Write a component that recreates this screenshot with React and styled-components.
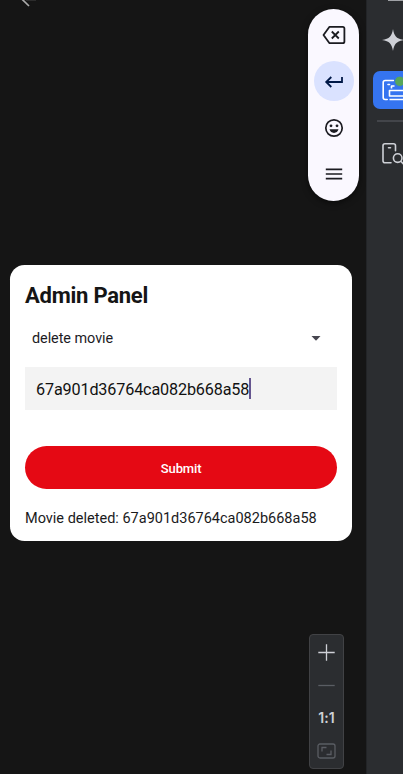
import React from 'react';
import styled, { createGlobalStyle } from 'styled-components';

const GlobalStyle = createGlobalStyle`
  * { box-sizing: border-box; }
  body { margin: 0; background: #151515; font-family: Roboto, sans-serif; overflow: hidden; }
  svg { display: block; flex: none; }
`;

const Window = styled.div`
  display: flex;
  width: 403px;
  height: 774px;
  overflow: hidden;
  background: #151515;
`;

const Device = styled.main`
  position: relative;
  display: flex;
  flex-direction: column;
  width: 366px;
  height: 100%;
  flex: none;
  background: #151515;
`;

const TopBar = styled.header`
  height: 265px;
  flex: none;
  padding-left: 20px;
`;

const Card = styled.section`
  display: flex;
  flex-direction: column;
  width: 341.5px;
  height: 276.3px;
  margin-left: 10.4px;
  padding: 0 14.6px;
  border-radius: 14.5px;
  background: #fff;
  color: #1a1a1c;
`;

const Title = styled.h1`
  margin: 18px 0 0;
  font-size: 22px;
  line-height: 26px;
  font-weight: 700;
  letter-spacing: -0.24px;
  color: #151515;
`;

const Select = styled.div`
  display: flex;
  align-items: center;
  justify-content: space-between;
  height: 43px;
  margin-top: 8px;
  padding: 0 16px 0 7px;
  font-size: 14.4px;
  letter-spacing: -0.04px;
  color: #1c1b1f;
`;

const Field = styled.div`
  display: flex;
  align-items: center;
  height: 43px;
  margin-top: 7px;
  padding: 2px 0 0 11px;
  background: #f3f3f3;
  font-size: 16.2px;
  letter-spacing: -0.15px;
  color: #111;
`;

const Caret = styled.span`
  width: 2px;
  height: 21px;
  margin: -2px 0 0 -0.5px;
  background: #65558f;
`;

const Submit = styled.button`
  height: 43px;
  margin-top: 36px;
  padding: 1px 0 0;
  border: 0;
  border-radius: 22px;
  background: #e50914;
  color: #fff;
  font: 500 13px Roboto, sans-serif;
  letter-spacing: -0.1px;
`;

const Message = styled.p`
  margin: 21px 0 0;
  font-size: 14.5px;
  line-height: 18px;
  white-space: nowrap;
`;

const KeyPill = styled.div`
  position: absolute;
  top: 9px;
  left: 308px;
  display: flex;
  flex-direction: column;
  align-items: center;
  width: 51px;
  height: 192px;
  padding-top: 6px;
  gap: 6.3px;
  border-radius: 25.5px;
  background: #faf8ff;
  box-shadow: 0 2px 6px #0008;
`;

const Key = styled.div`
  display: flex;
  align-items: center;
  justify-content: center;
  width: 40px;
  height: 40px;
  border-radius: 50%;
  background: ${p => (p.$active ? '#dae2ff' : 'transparent')};
`;

const ZoomBar = styled.div`
  position: absolute;
  top: 634px;
  left: 309px;
  display: flex;
  flex-direction: column;
  align-items: center;
  width: 35px;
  height: 135px;
  padding-top: 1px;
  border: 1px solid #414245;
  border-radius: 4px;
  background: #2b2d30;
`;

const ZoomItem = styled.div`
  display: flex;
  align-items: center;
  justify-content: center;
  width: 33px;
  height: 33px;
  padding-bottom: ${p => p.$lift || 0}px;
  font: 600 14px Inter, sans-serif;
  letter-spacing: 0.1px;
  color: #ced0d6;
`;

const Rail = styled.aside`
  display: flex;
  flex-direction: column;
  width: 37px;
  height: 100%;
  overflow: hidden;
  border-left: 1px solid #222427;
  background: #2b2d30;
`;

const RailTop = styled.div`
  width: 15px;
  height: 1px;
  margin-left: 21px;
  background: #a0a2a6;
`;

const RailItem = styled.div`
  display: flex;
  align-items: center;
  width: 40px;
  height: 38px;
  flex: none;
  margin: ${p => p.$top}px 0 0 6px;
  padding-left: ${p => p.$inset}px;
  border-radius: 7px;
  background: ${p => (p.$active ? '#3574f0' : 'transparent')};
`;

const Divider = styled.div`
  height: 2px;
  flex: none;
  margin: 11px 0 0 10px;
  background: #43454a;
`;

const BackIcon = () => (
  <svg width="18" height="8" viewBox="20 0 18 8" fill="none">
    <path d="M21.8-1 29 6" stroke="#aaa" strokeWidth="1.7" />
    <path d="M26 0h10" stroke="#444" strokeWidth="1" />
  </svg>
);

const Backspace = () => (
  <svg width="24" height="20" viewBox="0 0 24 20" fill="none" stroke="#1b1b21" strokeWidth="1.8">
    <path d="M7.5 1.8h13.2q1.7 0 1.7 1.7v13q0 1.7-1.7 1.7H7.5L1.5 10Z" strokeLinejoin="round" />
    <path d="m9.8 6.5 7 7m0-7-7 7" />
  </svg>
);

const Enter = () => (
  <svg width="20" height="16" viewBox="0 0 20 16" fill="none" stroke="#001847" strokeWidth="1.8">
    <path d="M18 4v5H3M7.3 4l-5.1 5 5.1 5" />
  </svg>
);

const Smile = () => (
  <svg width="20" height="20" viewBox="0 0 20 20">
    <circle cx="10" cy="10" r="8.2" fill="none" stroke="#1b1b21" strokeWidth="1.7" />
    <circle cx="7" cy="7.8" r="1.4" fill="#1b1b21" />
    <circle cx="13" cy="7.8" r="1.4" fill="#1b1b21" />
    <path d="M5.5 11.3h9c-.6 2.2-2.3 3.6-4.5 3.6s-3.9-1.4-4.5-3.6Z" fill="#1b1b21" />
  </svg>
);

const Menu = () => (
  <svg width="18" height="14" viewBox="0 0 18 14" stroke="#1b1b21" strokeWidth="1.7">
    <path d="M.8 2.3h16.4M.8 7h16.4M.8 11.7h16.4" />
  </svg>
);

const Sparkle = () => (
  <svg width="22" height="22" viewBox="0 0 22 22">
    <path d="M11 0c1.2 7.2 3.4 9.8 11 11-7.6 1.2-9.8 3.8-11 11C9.8 14.8 7.6 12.2 0 11 7.6 9.8 9.8 7.2 11 0Z" fill="#ced0d6" />
  </svg>
);

const RunningDevice = () => (
  <svg width="27" height="34" viewBox="0 0 27 34" fill="none" stroke="#fff" strokeWidth="1.6" strokeLinejoin="round">
    <path d="M11.5 7.5H3.2q-2 0-2 2v15q0 2 2 2h2M6 11.5h1.5" strokeLinecap="round" />
    <path d="M9.5 15.5v-2.5h3M7.5 17.5h15v5.5h-15ZM7.5 26.5H24" />
    <circle cx="17.8" cy="8.3" r="5.2" fill="#57a65a" stroke="#3574f0" strokeWidth="1" />
  </svg>
);

const DeviceSearch = () => (
  <svg width="24" height="24" viewBox="0 0 24 24" fill="none" stroke="#ced0d6" strokeWidth="1.6" strokeLinecap="round">
    <path d="M9 20.8H3q-2 0-2-2V3.7q0-2 2-2h8.5q2 0 2 2v5M6.5 5.7h2" />
    <circle cx="15.7" cy="16.1" r="4.3" />
    <path d="m19 19.5 3 3" />
  </svg>
);

export default function App() {
  return (
    <>
      <GlobalStyle />
      <Window>
        <Device>
          <TopBar><BackIcon /></TopBar>
          <Card>
            <Title>Admin Panel</Title>
            <Select>
              delete movie
              <svg width="10" height="5" viewBox="0 0 10 5"><path d="M.5 0h9L5 4.7Z" fill="#47464f" /></svg>
            </Select>
            <Field>67a901d36764ca082b668a58<Caret /></Field>
            <Submit>Submit</Submit>
            <Message>Movie deleted: 67a901d36764ca082b668a58</Message>
          </Card>
          <KeyPill>
            <Key><Backspace /></Key>
            <Key $active><Enter /></Key>
            <Key><Smile /></Key>
            <Key><Menu /></Key>
          </KeyPill>
          <ZoomBar>
            <ZoomItem>
              <svg width="17" height="17" viewBox="0 0 17 17" stroke="#ced0d6" strokeWidth="1.3"><path d="M8.5.3v16.4M.3 8.5h16.4" /></svg>
            </ZoomItem>
            <ZoomItem>
              <svg width="17" height="3" viewBox="0 0 17 3" stroke="#5a5d63" strokeWidth="1.3"><path d="M.3 1.5h16.4" /></svg>
            </ZoomItem>
            <ZoomItem $lift={2}>1:1</ZoomItem>
            <ZoomItem $lift={2}>
              <svg width="19" height="16" viewBox="0 0 19 16" fill="none" stroke="#5a5d63" strokeWidth="1.3">
                <rect x="1" y="1" width="17" height="14" rx="2" />
                <path d="M5 8.5V4.5h4.5M14 7.5v4H9.5" />
              </svg>
            </ZoomItem>
          </ZoomBar>
        </Device>
        <Rail>
          <RailTop />
          <RailItem $top={19.5} $inset={8.5}><Sparkle /></RailItem>
          <RailItem $top={12} $inset={9} $active><RunningDevice /></RailItem>
          <Divider />
          <RailItem $top={13} $inset={9}><DeviceSearch /></RailItem>
        </Rail>
      </Window>
    </>
  );
}
